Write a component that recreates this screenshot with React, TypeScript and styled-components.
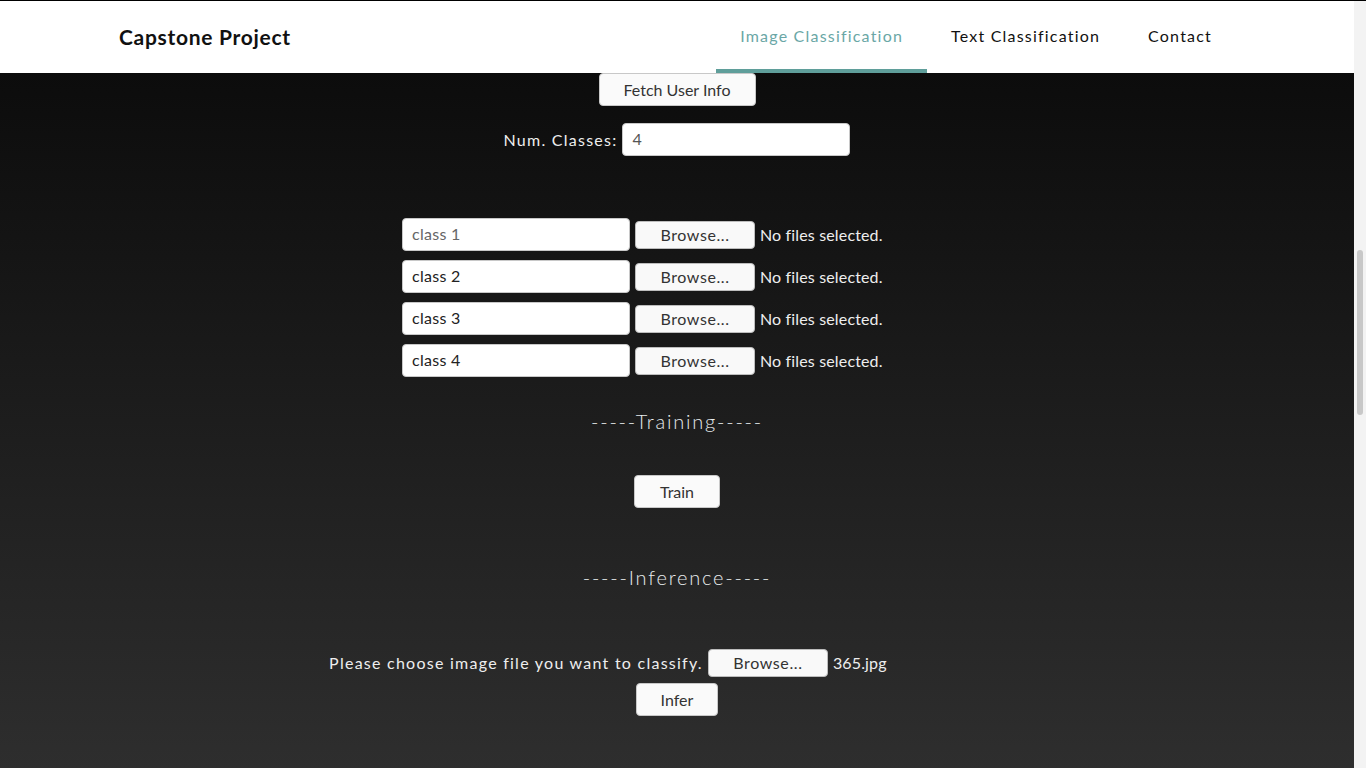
import styled, { createGlobalStyle } from "styled-components";

const GlobalStyle = createGlobalStyle`
  html, body {
    margin: 0;
    padding: 0;
    overflow: hidden;
  }
  body {
    font-family: "Lato", "Open Sans", sans-serif;
  }
  * {
    box-sizing: border-box;
  }
`;

const classRows = [
  { name: "class 1", muted: true },
  { name: "class 2", muted: false },
  { name: "class 3", muted: false },
  { name: "class 4", muted: false },
];

const App = () => {
  return (
    <>
      <GlobalStyle />
      <Page>
        <Main>
          <Header>
            <Brand>Capstone Project</Brand>
            <Nav>
              <NavLink active>Image Classification</NavLink>
              <NavLink>Text Classification</NavLink>
              <NavLink>Contact</NavLink>
            </Nav>
          </Header>
          <Content>
            <Button width={157}>Fetch User Info</Button>
            <Row top={17}>
              <Label>Num. Classes:</Label>
              <TextInput defaultValue="4" tone="#555" />
            </Row>
            <ClassList>
              {classRows.map((row) => (
                <Row key={row.name}>
                  <TextInput
                    defaultValue={row.name}
                    tone={row.muted ? "#666" : "#222"}
                  />
                  <FileField>
                    <BrowseButton>Browse...</BrowseButton>
                    <FileName>No files selected.</FileName>
                  </FileField>
                </Row>
              ))}
            </ClassList>
            <SectionTitle top={31}>-----Training-----</SectionTitle>
            <Button width={86} top={41}>
              Train
            </Button>
            <SectionTitle top={56}>-----Inference-----</SectionTitle>
            <Row top={56}>
              <Label>Please choose image file you want to classify.</Label>
              <FileField>
                <BrowseButton>Browse...</BrowseButton>
                <FileName>365.jpg</FileName>
              </FileField>
            </Row>
            <Button width={82} top={4}>
              Infer
            </Button>
          </Content>
        </Main>
        <ScrollTrack>
          <ScrollThumb />
        </ScrollTrack>
      </Page>
    </>
  );
};

const Page = styled.div`
  display: flex;
  height: 100vh;
  border-top: 1px solid #000;
`;

const Main = styled.div`
  flex: 1;
  display: flex;
  flex-direction: column;
  background: linear-gradient(to bottom, #090909 0%, #0d0d0d 12%, #2e2e2e 100%);
`;

const Header = styled.header`
  height: 72px;
  flex-shrink: 0;
  background-color: #ffffff;
  display: flex;
  align-items: center;
  justify-content: space-between;
  padding: 0 118px 0 119px;
`;

const Brand = styled.div`
  padding-bottom: 2px;
  font-size: 21px;
  font-weight: 700;
  letter-spacing: 0.7px;
  color: #111;
`;

const Nav = styled.nav`
  display: flex;
  height: 100%;
`;

const NavLink = styled.a<{ active?: boolean }>`
  display: flex;
  align-items: center;
  height: 100%;
  padding: 0 24px;
  font-size: 16px;
  letter-spacing: 1.2px;
  color: ${(props) => (props.active ? "#6aa7a6" : "#111")};
  border-bottom: 4px solid
    ${(props) => (props.active ? "#5f9e9a" : "transparent")};
  cursor: pointer;
`;

const Content = styled.main`
  display: flex;
  flex-direction: column;
  align-items: center;
`;

const Button = styled.button<{ width: number; top?: number }>`
  width: ${(props) => props.width}px;
  height: 33px;
  margin-top: ${(props) => props.top || 0}px;
  padding-bottom: 2px;
  background-color: #fafafa;
  border: 1px solid #c8c8c8;
  border-radius: 4px;
  font-family: inherit;
  font-size: 16px;
  color: #333;
  cursor: pointer;
`;

const Row = styled.div<{ top?: number }>`
  display: flex;
  align-items: center;
  gap: 5px;
  height: 33px;
  margin-top: ${(props) => props.top || 0}px;
`;

const Label = styled.span`
  padding-bottom: 1px;
  font-size: 16px;
  letter-spacing: 1.25px;
  color: #eeeeee;
`;

const TextInput = styled.input<{ tone: string }>`
  width: 228px;
  height: 33px;
  padding: 0 9px 2px;
  background-color: #fff;
  border: 1px solid #c8c8c8;
  border-radius: 4px;
  font-family: inherit;
  font-size: 16px;
  letter-spacing: 0.3px;
  color: ${(props) => props.tone};
  outline: none;
`;

const ClassList = styled.div`
  display: flex;
  flex-direction: column;
  gap: 9px;
  margin-top: 62px;
`;

const FileField = styled.div`
  display: flex;
  align-items: center;
  gap: 5px;
  width: 317px;
`;

const BrowseButton = styled.button`
  width: 120px;
  height: 28px;
  padding-bottom: 2px;
  background-color: #f9f9f9;
  border: 1px solid #bdbdbd;
  border-radius: 4px;
  font-family: inherit;
  font-size: 16px;
  letter-spacing: 0.6px;
  color: #333;
  cursor: pointer;
`;

const FileName = styled.span`
  padding-bottom: 1px;
  font-size: 16px;
  letter-spacing: 0.15px;
  color: #eeeeee;
`;

const SectionTitle = styled.h2<{ top: number }>`
  margin: ${(props) => props.top}px 0 0;
  height: 26px;
  line-height: 26px;
  font-size: 20px;
  font-weight: 300;
  letter-spacing: 1.8px;
  color: #e8ecee;
`;

const ScrollTrack = styled.div`
  width: 12px;
  flex-shrink: 0;
  background-color: #f3f3f3;
  display: flex;
  justify-content: center;
  padding-top: 249px;
`;

const ScrollThumb = styled.div`
  width: 6px;
  height: 165px;
  border-radius: 3px;
  background-color: #c8c8c8;
`;

export default App;
